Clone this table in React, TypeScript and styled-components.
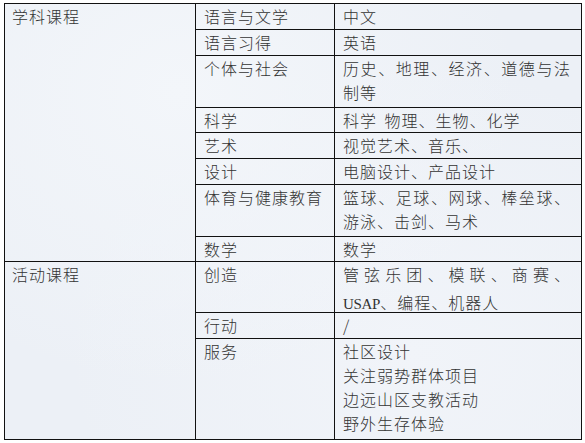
import React from "react";
import styled, { createGlobalStyle } from "styled-components";

const GlobalStyle = createGlobalStyle`
  html, body {
    margin: 0;
    padding: 0;
    background: #ffffff;
  }
  body {
    font-family: "Noto Sans CJK SC", "Noto Sans", sans-serif;
    color: #333333;
  }
  * { box-sizing: border-box; }
`;

type Line = { text: React.ReactNode; justify?: boolean; gap?: number };
type Item = { label: string; lines: Line[]; h: number };
type Group = { name: string; items: Item[] };

const Latin = styled.span`
  font-family: "Liberation Serif", serif;
  font-weight: 400;
  letter-spacing: -0.3px;
  font-size: 15px;
`;

const groups: Group[] = [
  {
    name: "学科课程",
    items: [
      { label: "语言与文学", lines: [{ text: "中文" }], h: 26 },
      { label: "语言习得", lines: [{ text: "英语" }], h: 26 },
      {
        label: "个体与社会",
        lines: [{ text: "历史、地理、经济、道德与法", justify: true }, { text: "制等" }],
        h: 52,
      },
      { label: "科学", lines: [{ text: "科学 物理、生物、化学" }], h: 25 },
      { label: "艺术", lines: [{ text: "视觉艺术、音乐、" }], h: 26 },
      { label: "设计", lines: [{ text: "电脑设计、产品设计" }], h: 26 },
      {
        label: "体育与健康教育",
        lines: [{ text: "篮球、足球、网球、棒垒球、", justify: true }, { text: "游泳、击剑、马术" }],
        h: 52,
      },
      { label: "数学", lines: [{ text: "数学" }], h: 25 },
    ],
  },
  {
    name: "活动课程",
    items: [
      {
        label: "创造",
        lines: [
          { text: "管弦乐团、模联、商赛、", justify: true },
          {
            text: (
              <>
                <Latin>USAP</Latin>、编程、机器人
              </>
            ),
            gap: 4,
          },
        ],
        h: 51,
      },
      { label: "行动", lines: [{ text: "/" }], h: 26 },
      {
        label: "服务",
        lines: [
          { text: "社区设计" },
          { text: "关注弱势群体项目" },
          { text: "边远山区支教活动" },
          { text: "野外生存体验" },
        ],
        h: 101,
      },
    ],
  },
];

const Page = styled.div`
  padding: 3px 4px 4px 4px;
  width: 585px;
  height: 443px;
  background: #ffffff;
`;

const Table = styled.div<{ $rows: string }>`
  display: grid;
  grid-template-columns: 191px 139px 247px;
  grid-template-rows: ${(p) => p.$rows};
  width: 578px;
  border-top: 1px solid #111111;
  border-left: 1px solid #111111;
  background:
    radial-gradient(ellipse at 30% 20%, #f3f6fa 0%, rgba(243, 246, 250, 0) 60%),
    radial-gradient(ellipse at 70% 80%, #f1f4f9 0%, rgba(241, 244, 249, 0) 60%),
    #ecf0f6;
`;

const Cell = styled.div<{ $row: number; $span?: number; $col: number }>`
  grid-column: ${(p) => p.$col};
  grid-row: ${(p) => p.$row} / span ${(p) => p.$span ?? 1};
  border-right: 1px solid #111111;
  border-bottom: 1px solid #111111;
  padding: 0 9px 0 8px;
  font-size: 16px;
  font-weight: 300;
  line-height: 24px;
  letter-spacing: 1px;
  word-spacing: 3px;
  white-space: nowrap;
  overflow: hidden;
`;

const GroupCell = styled(Cell)`
  padding-left: 7px;
`;

const LabelCell = styled(Cell)``;

const ContentCell = styled(Cell)`
  padding-right: 10px;
`;

const TextLine = styled.div<{ $justify?: boolean; $gap?: number }>`
  text-align: ${(p) => (p.$justify ? "justify" : "left")};
  text-align-last: ${(p) => (p.$justify ? "justify" : "auto")};
  margin-top: ${(p) => p.$gap ?? 0}px;
`;

export default function App() {
  const heights: number[] = [];
  groups.forEach((g) => g.items.forEach((i) => heights.push(i.h)));
  const rows = heights.map((h) => `${h}px`).join(" ");

  let row = 1;
  const cells: React.ReactNode[] = [];
  groups.forEach((g, gi) => {
    cells.push(
      <GroupCell key={`g${gi}`} $col={1} $row={row} $span={g.items.length}>
        {g.name}
      </GroupCell>
    );
    g.items.forEach((it, ii) => {
      cells.push(
        <LabelCell key={`l${gi}-${ii}`} $col={2} $row={row}>
          {it.label}
        </LabelCell>
      );
      cells.push(
        <ContentCell key={`c${gi}-${ii}`} $col={3} $row={row}>
          {it.lines.map((ln, li) => (
            <TextLine key={li} $justify={ln.justify} $gap={ln.gap}>
              {ln.text}
            </TextLine>
          ))}
        </ContentCell>
      );
      row += 1;
    });
  });

  return (
    <>
      <GlobalStyle />
      <Page>
        <Table $rows={rows}>{cells}</Table>
      </Page>
    </>
  );
}
